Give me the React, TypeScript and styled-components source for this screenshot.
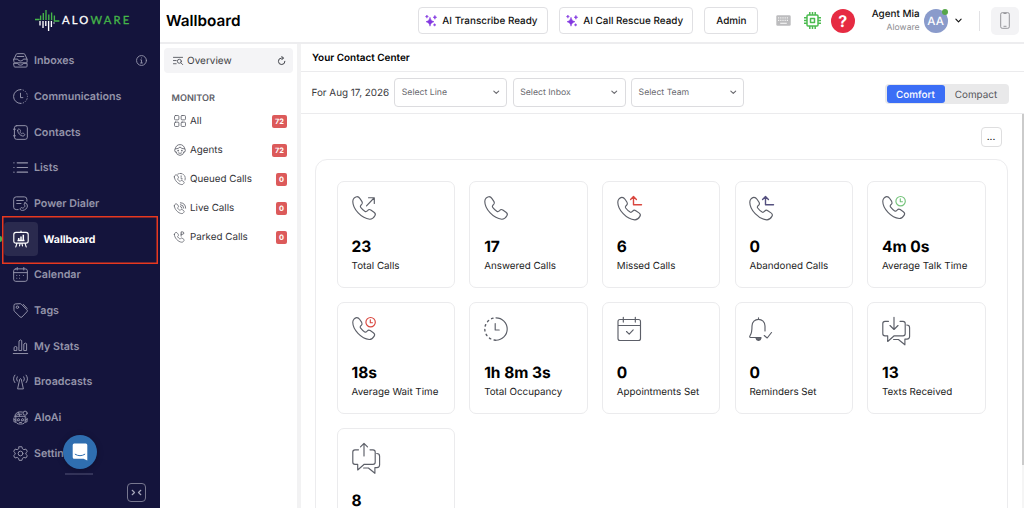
import React from "react";
import styled, { createGlobalStyle } from "styled-components";

const GlobalStyle = createGlobalStyle`
  *, *::before, *::after { box-sizing: border-box; }
  html, body { margin: 0; padding: 0; }
  body {
    font-family: Inter, "Liberation Sans", sans-serif;
    text-rendering: geometricPrecision;
    background: #fff;
    color: #111;
    overflow: hidden;
  }
  button { text-rendering: inherit; }
  svg { display: block; flex: none; }
`;

const Page = styled.div`
  display: flex;
  width: 1024px;
  height: 508px;
  overflow: hidden;
  background: #fff;
`;

/* ---------- Sidebar ---------- */

const Sidebar = styled.aside`
  position: relative;
  display: flex;
  flex-direction: column;
  flex: none;
  width: 160px;
  height: 508px;
  background: #14143c;
`;

const Brand = styled.div`
  display: flex;
  align-items: center;
  height: 42.8px;
  padding: 0 0 1px 35px;
`;

const BrandName = styled.span`
  margin-left: 2px;
  font-family: Lato, Inter, sans-serif;
  font-size: 11.2px;
  line-height: 14px;
  letter-spacing: 2.2px;
  color: #fff;
  white-space: nowrap;
  -webkit-text-stroke: 0.3px currentColor;
`;

const BrandAccent = styled.span`
  color: #45b649;
`;

const NavItem = styled.a<{ $active?: boolean }>`
  display: flex;
  align-items: center;
  flex: none;
  height: 35.7px;
  padding-left: ${(p) => (p.$active ? "4px" : "13px")};
  gap: 6px;
  font-size: ${(p) => (p.$active ? "10.5px" : "10.7px")};
  font-weight: ${(p) => (p.$active ? 700 : 600)};
  color: ${(p) => (p.$active ? "#fff" : "#9494aa")};
  white-space: nowrap;
`;

const NavTile = styled.span`
  display: flex;
  align-items: center;
  justify-content: center;
  width: 33.5px;
  height: 34px;
  border-radius: 4px;
  background: #2a2a4e;
`;

const NavInfo = styled.span`
  margin-left: auto;
  padding-right: 13px;
`;

const ActiveDot = styled.span`
  position: absolute;
  left: -2px;
  top: 236px;
  width: 4px;
  height: 6px;
  border-radius: 3px;
  background: #4caf50;
`;

const Highlight = styled.span`
  position: absolute;
  left: 2px;
  top: 216px;
  width: 156px;
  height: 48px;
  border: 1px solid #e8381f;
  box-shadow: inset 0 0 0 0.5px #e8381f;
`;

const ChatBubble = styled.button`
  position: absolute;
  left: 63px;
  top: 435px;
  display: flex;
  align-items: center;
  justify-content: center;
  width: 34px;
  height: 34px;
  padding: 0;
  border: 0;
  border-radius: 50%;
  background: #2f6eb0;
  box-shadow: 0 1px 6px rgba(0, 0, 0, 0.25);
`;

const ChatHandle = styled.span`
  position: absolute;
  left: 65px;
  top: 473px;
  width: 28px;
  height: 1.5px;
  background: #34345a;
`;

const CollapseRow = styled.div`
  display: flex;
  justify-content: flex-end;
  margin-top: auto;
  padding: 0 14px 6px 0;
`;

const CollapseButton = styled.button`
  display: flex;
  align-items: center;
  justify-content: center;
  width: 19px;
  height: 19px;
  padding: 0;
  border: 1px solid #77778f;
  border-radius: 4px;
  background: transparent;
  color: #a6a6ba;
`;

/* ---------- Header ---------- */

const Main = styled.div`
  display: flex;
  flex-direction: column;
  flex: none;
  width: 864px;
`;

const Header = styled.header`
  display: flex;
  align-items: center;
  flex: none;
  height: 44px;
  padding: 0 5px 1px 6px;
  border-bottom: 2px solid #ededef;
`;

const PageTitle = styled.h1`
  margin: 0;
  width: 252px;
  font-size: 15.3px;
  line-height: 20px;
  font-weight: 600;
  color: #000;
`;

const HeaderButton = styled.button<{ $width: number; $gap: number }>`
  display: flex;
  align-items: center;
  justify-content: center;
  flex: none;
  gap: 5.5px;
  width: ${(p) => p.$width}px;
  height: 27px;
  margin-right: ${(p) => p.$gap}px;
  padding: 0 3px 0 0;
  border: 1px solid #e0e0e3;
  border-radius: 4px;
  background: #fff;
  font: 500 9.9px Inter, sans-serif;
  color: #111;
  white-space: nowrap;
`;

const AdminButton = styled(HeaderButton)`
  padding: 0 0 0 1px;
`;

const HeaderIcon = styled.span<{ $gap: number }>`
  margin-right: ${(p) => p.$gap}px;
`;

const HelpCircle = styled.span`
  display: flex;
  align-items: center;
  justify-content: center;
  width: 24px;
  height: 24px;
  border-radius: 50%;
  background: #e62b42;
  color: #fff;
  font-size: 16px;
  font-weight: 700;
`;

const UserText = styled.div`
  display: flex;
  flex-direction: column;
  align-items: flex-end;
  width: 65px;
  margin-right: 4px;
  line-height: 14px;
  white-space: nowrap;
`;

const UserName = styled.span`
  font-size: 9.9px;
  font-weight: 500;
  color: #111;
`;

const UserCompany = styled.span`
  font-size: 8.6px;
  color: #8e8e93;
`;

const Avatar = styled.span`
  position: relative;
  display: flex;
  align-items: center;
  justify-content: center;
  width: 24px;
  height: 24px;
  border-radius: 50%;
  background: #8a9bcb;
  color: #fff;
  font-size: 11.5px;
  font-weight: 500;
`;

const StatusDot = styled.span`
  position: absolute;
  right: 0;
  top: 0;
  width: 6px;
  height: 6px;
  border-radius: 50%;
  background: #57a64a;
`;

const UserMenuToggle = styled.span`
  margin-left: 7.5px;
`;

const HeaderDivider = styled.span`
  width: 1px;
  height: 20px;
  margin: 0 11.5px 0 16.5px;
  background: #e2e2e5;
`;

const PhoneButton = styled.button`
  display: flex;
  align-items: center;
  justify-content: center;
  width: 28px;
  height: 28px;
  padding: 0;
  border: 0;
  border-radius: 5px;
  background: #f3f3f5;
`;

/* ---------- Monitor column ---------- */

const Body = styled.div`
  display: flex;
  flex: 1;
  min-height: 0;
`;

const Monitor = styled.nav`
  display: flex;
  flex-direction: column;
  flex: none;
  width: 141px;
  padding: 4px 4px 0 4px;
  border-right: 4px solid #f2f2f3;
`;

const OverviewRow = styled.div`
  display: flex;
  align-items: center;
  height: 25px;
  padding: 0 7px 0 9px;
  gap: 4px;
  border-radius: 4px;
  background: #f4f4f6;
  font-size: 10px;
  color: #3d3d42;
`;

const Refresh = styled.span`
  margin-left: auto;
`;

const MonitorHeading = styled.div`
  height: 28px;
  margin-top: 14px;
  padding: 0 0 0 7.5px;
  font-size: 9.1px;
  line-height: 24px;
  font-weight: 600;
  color: #5e6068;
`;

const MonitorItem = styled.div`
  display: flex;
  align-items: center;
  height: 28.9px;
  padding: 0 6px 0 9.5px;
  gap: 4.5px;
  font-size: 9.8px;
  color: #333338;
  white-space: nowrap;
`;

const MonitorName = styled.span`
  padding-top: 1px;
`;

const MonitorItems = styled.div`
  margin-top: -8.5px;
`;

const Badge = styled.span`
  margin: 1px 0 0 auto;
  padding: 0 3px;
  height: 13px;
  border-radius: 2px;
  background: #dc5a5a;
  font-size: 7.4px;
  line-height: 13px;
  font-weight: 700;
  color: #fff;
`;

/* ---------- Content ---------- */

const Content = styled.section`
  display: flex;
  flex-direction: column;
  flex: 1;
  min-width: 0;
`;

const ContentTitle = styled.h2`
  flex: none;
  height: 28px;
  margin: 0;
  padding-left: 11px;
  border-bottom: 1px solid #ebebed;
  font-size: 9.95px;
  line-height: 28px;
  font-weight: 600;
  color: #000;
`;

const Toolbar = styled.div`
  display: flex;
  align-items: center;
  flex: none;
  height: 42px;
  padding: 0 15px 0 10.5px;
  border-bottom: 1px solid #ebebed;
`;

const DateLabel = styled.span`
  width: 82.8px;
  font-size: 9.9px;
  color: #3a3a3e;
  white-space: nowrap;
`;

const Select = styled.div`
  display: flex;
  align-items: center;
  justify-content: space-between;
  width: 113px;
  height: 29px;
  margin-right: 5.4px;
  padding: 0 7px 0 6.5px;
  border: 1px solid #dcdcdf;
  border-radius: 4px;
  font-size: 8.7px;
  color: #6b6b70;
`;

const Segmented = styled.div`
  display: flex;
  align-items: center;
  width: 124px;
  height: 20px;
  margin: 3px 0 0 auto;
  padding: 0 1.5px;
  border-radius: 4px;
  background: #e9e9ea;
`;

const Segment = styled.button<{ $selected?: boolean }>`
  flex: ${(p) => (p.$selected ? "0 0 58px" : "1")};
  height: 17.5px;
  padding: 1px 0 0;
  border: 0;
  border-radius: 3px;
  background: ${(p) => (p.$selected ? "#3b6ef6" : "transparent")};
  font: ${(p) => (p.$selected ? 500 : 400)} 9.9px Inter, sans-serif;
  color: ${(p) => (p.$selected ? "#fff" : "#55555a")};
`;

const ScrollArea = styled.div`
  display: flex;
  flex: 1;
  min-height: 0;
`;

const Board = styled.div`
  display: flex;
  flex-direction: column;
  flex: 1;
  min-width: 0;
  padding: 13px 14px 0 14px;
  overflow: hidden;
`;

const MoreButton = styled.button`
  align-self: flex-end;
  flex: none;
  width: 21px;
  height: 20px;
  margin-right: 6px;
  padding: 0;
  border: 1px solid #dededf;
  border-radius: 4px;
  background: #fff;
  font: 400 10px/16px Inter, sans-serif;
  color: #222;
`;

const CardPanel = styled.div`
  display: grid;
  grid-template-columns: repeat(5, 118.5px);
  grid-template-rows: 107.5px 111.5px 114.5px;
  column-gap: 14.1px;
  row-gap: 14px;
  flex: none;
  height: 420px;
  margin-top: 12px;
  padding: 20.5px 20.8px;
  border: 1px solid #ececee;
  border-radius: 12px;
`;

const Card = styled.article`
  display: flex;
  flex-direction: column;
  padding: 14px 0 10.6px 13.8px;
  border: 1px solid #ebebed;
  border-radius: 7px;
`;

const CardIcon = styled.div`
  flex: 1;
`;

const CardValue = styled.div`
  font-size: 15.5px;
  line-height: 20px;
  font-weight: 700;
  color: #000;
`;

const CardLabel = styled.div`
  padding-top: 1px;
  font-size: 9.8px;
  line-height: 18px;
  color: #222;
  white-space: nowrap;
`;

const Scrollbar = styled.div`
  flex: none;
  width: 2.5px;
  background: #f5f5f5;
`;

const ScrollThumb = styled.div`
  height: 351px;
  background: #cbcbcb;
`;

/* ---------- Icons ---------- */

type GlyphProps = {
  size?: number;
  box?: number;
  weight?: number;
  color?: string;
  children: React.ReactNode;
};

const Glyph = ({ size = 15, box = 16, weight = 1, color = "currentColor", children }: GlyphProps) => (
  <svg
    width={size}
    height={size}
    viewBox={`0 0 ${box} ${box}`}
    fill="none"
    stroke={color}
    strokeWidth={weight}
    strokeLinecap="round"
    strokeLinejoin="round"
    overflow="visible"
  >
    {children}
  </svg>
);

const HANDSET =
  "M.8 5.5C.8 3 2.8 .9 4.8 .7C6.2 .6 7.2 1.4 8 2.6L10 5.6C10.7 6.8 10.5 7.8 9.6 8.6L8.8 9.3C8.2 10 8.2 10.6 8.7 11.3C10 13 11.5 14.5 13.1 15.4C13.9 15.8 14.5 15.7 15.1 15L15.8 14.3C16.6 13.4 17.7 13.3 18.8 14L22 16.2C23.5 17.2 23.7 18.4 22.9 19.7C21.6 21.9 20.2 23.3 17.8 23.2C9.5 22.6.8 13 .8 5.5Z";

const Logo = () => (
  <svg width="25" height="22" viewBox="0 0 25 22" fill="none" strokeWidth="1.35">
    <path stroke="#45b649" d="M0 9.5h4.6M5.6 5.5v4.7M8.3 3v7M11 0v10M13.8 4.5v5.7M16.6 2.5v7.7M19.4 5.5v5.5h5" />
    <path stroke="#fff" d="M5 11v4.5M8 11v7M10.8 11v5M13.6 11v10M16.4 11v6M19 12.5v1" />
  </svg>
);

const navIcons: Record<string, React.ReactNode> = {
  Inboxes: (
    <path d="M1 6.5L3.5 1.2Q3.8.7 4.5.7h7q.7 0 1 .5L15 6.5M1 6.5h4q.3 2 3 2t3-2h4v3.2q0 .8-.8.8H1.8Q1 10.5 1 9.7zM1 11h4q.3 2 3 2t3-2h4v3q0 1-1 1H2q-1 0-1-1zM4.5 3.7h7" />
  ),
  Communications: (
    <>
      <path d="M8 .6a7.4 7.4 0 1 0 0 14.8M8 4.5v4.7h2.5" />
      <path d="M8 .6a7.4 7.4 0 0 1 0 14.8" strokeDasharray=".6 2.2" />
    </>
  ),
  Contacts: (
    <>
      <path d="M4 .7h9q2.3 0 2.3 2.3v10q0 2.3-2.3 2.3H4Q1.5 15.3 1.5 13V3Q1.5.7 4 .7zM.5 4.5h2M.5 11.5h2" />
      <g transform="translate(4.6 4) scale(.34)" strokeWidth="2.9">
        <path d={HANDSET} />
      </g>
    </>
  ),
  Lists: <path d="M.9 3h.2M.9 8h.2M.9 13h.2M4.5 3h11M4.5 8h11M4.5 13h11" strokeWidth="1.3" />,
  "Power Dialer": (
    <>
      <path d="M5.5 14.5H3.5Q.7 14.5.7 12V3.5Q.7.9 3.5.9h8.5q2.8 0 2.8 2.6v2M4 4.8h7M4 8h4.5" />
      <path d="M12.8 7.2q2.7.5 2.6 3.5c-.3 2.6-2.6 4.5-5.2 4.7-2 .1-3-1-2.4-2.2.8-1.3 2-.8 2.6-.2 1.2-.5 2.2-1.4 2.4-2.5-1-.7-1.4-2.6 0-3.3z" />
    </>
  ),
  Calendar: (
    <path d="M3 2h10q2.3 0 2.3 2v9q0 2.3-2.3 2.3H3Q.7 15.3.7 13V4Q.7 2 3 2zM.7 6h14.6M4.5.5v2.7M11.5.5v2.7M4 9h.1M7 9h.1M11 9h.1M4 12h.1M7 12h.1" />
  ),
  Tags: (
    <>
      <path d="M1 2.5Q1 1 2.5 1l5-.3q.8 0 1.4.6l6 6q1 1 0 2l-5.3 5.6q-1 1-2 0l-6-6Q1 8.3 1 7.5z" />
      <path d="M11 1.5l4 4.2" />
      <circle cx="4.7" cy="4.5" r="1.3" />
    </>
  ),
  "My Stats": (
    <path d="M.3 15.5h15.4M1.5 8.5q1.2-1.2 2.6 0v3.8H1.5zM6.7 1.7q1.3-1.6 2.6 0v10.6H6.7zM11.9 5q1.3-1.4 2.6 0v7.3h-2.6z" />
  ),
  Broadcasts: (
    <path d="M5 15.5L7.2 5.5q.8-1.2 1.6 0L11 15.5zM4.5 3q-1.5 2.2 0 4.5M2 1.2q-3 4 0 8M11.5 3q1.5 2.2 0 4.5M14 1.2q3 4 0 8" />
  ),
  AloAi: (
    <>
      <path d="M2 6.5q.8-4.2 5-4.5l3 .2M1.2 7.5l2-.8h8.6l2 .8M3 8v4q0 3 5 3t5-3V8M1 9v3.5l2 .5M15 9v3.5l-2 .5M4.3 4.5h5" />
      <path d="M5 9.5q.7-1 1.7 0v2H5zM9.3 9.5q.7-1 1.7 0v2H9.3zM7 13.3h2" />
      <circle cx="12.9" cy="3.4" r="2.2" />
      <path d="M2.7 5.5l1.2 1.2M6 2.5l1 4M1 10l2 1M15 10l-2 1" />
    </>
  ),
  Settings: (
    <>
      <path d="M6.5.8h3l.6 2.2 1.5.9 2.2-.6 1.5 2.5L13.7 7.3v1.5l1.6 1.5-1.5 2.5-2.2-.6-1.5.9-.6 2.2h-3l-.6-2.2-1.5-.9-2.2.6L.7 10.3l1.6-1.5V7.3L.7 5.8l1.5-2.5 2.2.6L5.9 3z" />
      <circle cx="8" cy="8" r="2.5" />
    </>
  ),
};

const WallboardGlyph = () => (
  <Glyph size={16} weight={1.15}>
    <path d="M3 1.3h10q2.2 0 2.2 2.2v6.4q0 2.2-2.2 2.2H3Q.8 12.1.8 9.9V3.5Q.8 1.3 3 1.3zM8 0v1M3.8 12.9l-1 3M12.2 12.9l1 3M7 12.9l-.5 2M9 12.9l.5 2" />
    <path d="M5.7 9.3V7M8 9.3V5.5M10.3 9.3V3.8M4.5 9.5h7" strokeWidth="1.5" strokeLinecap="butt" />
  </Glyph>
);

const Sparkles = () => (
  <svg width="12" height="12" viewBox="0 0 12 12" fill="#8338e0" stroke="#8338e0" strokeWidth=".5" strokeLinejoin="round">
    <path d="M5 2.2c.7 2.8 1.3 3.5 4 4.5-2.7 1-3.3 1.7-4 4.5-.7-2.8-1.3-3.5-4-4.5 2.7-1 3.3-1.7 4-4.5zM9.9.3c.3 1.3.6 1.6 1.9 2-1.3.4-1.6.7-1.9 2-.3-1.3-.6-1.6-1.9-2 1.3-.4 1.6-.7 1.9-2zM1.9 0c.2.9.5 1.3 1.5 1.6-1 .3-1.3.7-1.5 1.6C1.7 2.3 1.4 1.9.4 1.6 1.4 1.3 1.7.9 1.9 0zM9.6 8.6c.2.7.4 1 1.2 1.3-.8.3-1 .5-1.2 1.3-.2-.8-.4-1-1.2-1.3.8-.3 1-.6 1.2-1.3z" />
  </svg>
);

const Chevron = ({ color = "#333", size = 7 }: { color?: string; size?: number }) => (
  <Glyph size={size} box={8} weight={1.3} color={color}>
    <path d="M1 2.5L4 5.5L7 2.5" />
  </Glyph>
);

const KeyboardGlyph = () => (
  <svg width="15" height="11" viewBox="0 0 15 11">
    <rect x=".3" y=".3" width="14.4" height="10.4" rx="1.3" fill="#bcbcbe" />
    <path d="M2 2.8h11M2 5.3h11" stroke="#f2f2f2" strokeWidth="1.2" strokeDasharray="1.2 1" />
    <path d="M4.2 8.3h6.6" stroke="#f2f2f2" strokeWidth="1.2" />
  </svg>
);

const ChipGlyph = () => (
  <Glyph size={17} box={17} weight={1.5} color="#4cbb50">
    <rect x="3" y="3" width="11" height="11" rx="1" />
    <rect x="6.5" y="6.5" width="4" height="4" />
    <path strokeLinecap="butt" d="M5.8 0v3M8.5 0v3M11.2 0v3M5.8 14v3M8.5 14v3M11.2 14v3M0 5.8h3M0 8.5h3M0 11.2h3M14 5.8h3M14 8.5h3M14 11.2h3" />
  </Glyph>
);

const monitorIcons: Record<string, React.ReactNode> = {
  All: (
    <>
      <rect x=".7" y=".7" width="5.8" height="5.8" rx="1.3" />
      <rect x="9.5" y=".7" width="5.8" height="5.8" rx="1.3" />
      <rect x=".7" y="9.5" width="5.8" height="5.8" rx="1.3" />
      <rect x="9.5" y="9.5" width="5.8" height="5.8" rx="1.3" />
    </>
  ),
  Agents: (
    <>
      <path d="M1.5 6.5C2.3 2.8 4.7.8 8 .8s5.7 2 6.5 5.7M1.5 6.5q-1.5 1.5 0 4l1.5.5M14.5 6.5q1.5 1.5 0 4l-1.5.5M2.5 6.5Q6 6.5 8 4q2 2.5 5.5 2.5M2.5 10.5q1.2 4.7 5.5 4.7t5.5-4.7M6 12q2 1.3 4 0" />
      <path d="M5.5 8.7v.3M10.5 8.7v.3" strokeWidth="2" />
    </>
  ),
  "Queued Calls": (
    <>
      <g transform="translate(0 2) scale(.58)" strokeWidth="1.8">
        <path d={HANDSET} />
      </g>
      <path d="M5 1.5q4-2 7.5.5t2 8M9.5 3.8v4H12" strokeDasharray="2 1.5" />
    </>
  ),
  "Live Calls": (
    <>
      <g transform="translate(0 2) scale(.58)" strokeWidth="1.8">
        <path d={HANDSET} />
      </g>
      <path d="M8.5 6q2 .2 2 2.2M8.5 3.5q4.5.2 4.5 4.7M8.5 1q7 .2 7 7.2" />
    </>
  ),
  "Parked Calls": (
    <>
      <g transform="translate(0 1.5) scale(.58)" strokeWidth="1.8">
        <path d={HANDSET} />
      </g>
      <path d="M9.5 6.8V1.2h2q1.6.2 1.6 1.6T11.5 4.4h-2" strokeWidth="1.2" />
    </>
  ),
};

const RED = "#d9463e";

const BUBBLES = (
  <>
    <path d="M6.5 4.3H3Q.8 4.3.8 6.5v10.3q0 2 2.2 2h2.7v5.7l6.5-5.7H21q2.2 0 2.2-2V6.5q0-2.2-2.2-2.2h-3" />
    <path d="M24.7 8q2.9 0 2.9 2.7v8.9q0 2.5-2.7 2.5h-2v5.7l-6.5-5.3h-4.8" />
  </>
);

const cardIcons: Record<string, React.ReactNode> = {
  "Total Calls": (
    <>
      <path d={HANDSET} />
      <path d="M14.5 9.8L22 2M16.5 1.7h5.8v5.8" />
    </>
  ),
  "Answered Calls": <path d={HANDSET} />,
  "Missed Calls": (
    <>
      <path d={HANDSET} transform="translate(0 .7)" />
      <path stroke={RED} strokeWidth="1.4" d="M24.5 8.8h-8V.8M13.6 3.5L16.5.6l2.9 2.9" />
    </>
  ),
  "Abandoned Calls": (
    <>
      <path d={HANDSET} transform="translate(0 .7)" />
      <path stroke="#54507f" strokeWidth="1.4" d="M24.5 8.8h-8V.8M13.6 3.5L16.5.6l2.9 2.9" />
    </>
  ),
  "Average Talk Time": (
    <>
      <path d={HANDSET} transform="scale(.97)" />
      <path stroke="#74c37a" d="M23.3 5.2a4.7 4.7 0 1 1-9.4 0a4.7 4.7 0 1 1 9.4 0M18.3 2.7v3h2.2" />
    </>
  ),
  "Average Wait Time": (
    <>
      <path d={HANDSET} transform="scale(.97)" />
      <path stroke={RED} d="M23.3 5.2a4.7 4.7 0 1 1-9.4 0a4.7 4.7 0 1 1 9.4 0M18.3 2.7v3h2.2" />
    </>
  ),
  "Total Occupancy": (
    <>
      <path d="M12 .8a11.2 11.2 0 0 1 0 22.4M11.2 6.5v6.5h4" />
      <path d="M12 .8a11.2 11.2 0 0 0 0 22.4" strokeDasharray="1.5 3.5" strokeDashoffset="-3" strokeWidth="1.4" />
    </>
  ),
  "Appointments Set": (
    <path d="M3 2.5h18.5q2 0 2 2v17q0 2-2 2H3q-2 0-2-2v-17q0-2 2-2zM1 8.5h22.5M6.3.3v4.8M18.3.3v4.8M9.5 14.5l2.7 2.7 4-4.3" />
  ),
  "Reminders Set": (
    <>
      <path d="M9.5.8v1.4M12 20.5H1.5c-1-.2-1-1.4-.3-2.2Q3 16 3 9c0-4 3-6.6 6.5-6.6S16 5 16 9v5M15.2 18.5l3 2.5 4.3-5.5" />
      <path d="M7 21.2h5q-.5 2.2-2.5 2.2T7 21.2z" fill="#5c5f68" />
    </>
  ),
  "Texts Received": (
    <>
      {BUBBLES}
      <path d="M12 .2v12M8 8.5l4 4 4-4" />
    </>
  ),
  "Texts Sent": (
    <g transform="translate(0 2.5)">
      {BUBBLES}
      <path d="M12 10.5V-2M8.5 1.3L12-2.2l3.5 3.5" />
    </g>
  ),
};

/* ---------- Data ---------- */

const navigation = [
  "Inboxes",
  "Communications",
  "Contacts",
  "Lists",
  "Power Dialer",
  "Wallboard",
  "Calendar",
  "Tags",
  "My Stats",
  "Broadcasts",
  "AloAi",
  "Settings",
];

const monitors: [string, number][] = [
  ["All", 72],
  ["Agents", 72],
  ["Queued Calls", 0],
  ["Live Calls", 0],
  ["Parked Calls", 0],
];

const metrics: [string, string][] = [
  ["23", "Total Calls"],
  ["17", "Answered Calls"],
  ["6", "Missed Calls"],
  ["0", "Abandoned Calls"],
  ["4m 0s", "Average Talk Time"],
  ["18s", "Average Wait Time"],
  ["1h 8m 3s", "Total Occupancy"],
  ["0", "Appointments Set"],
  ["0", "Reminders Set"],
  ["13", "Texts Received"],
  ["8", "Texts Sent"],
];

/* ---------- Page ---------- */

export default function App() {
  return (
    <>
      <GlobalStyle />
      <Page>
        <Sidebar>
          <Brand>
            <Logo />
            <BrandName>
              ALO<BrandAccent>WARE</BrandAccent>
            </BrandName>
          </Brand>
          {navigation.map((name) =>
            name === "Wallboard" ? (
              <NavItem key={name} $active>
                <NavTile>
                  <WallboardGlyph />
                </NavTile>
                {name}
              </NavItem>
            ) : (
              <NavItem key={name}>
                <Glyph weight={1.05}>{navIcons[name]}</Glyph>
                {name}
                {name === "Inboxes" && (
                  <NavInfo>
                    <Glyph size={11} box={12} weight={1}>
                      <circle cx="6" cy="6" r="5.4" />
                      <path d="M6 3.2v.1M5.2 5.3H6v3.2M5 8.7h2" />
                    </Glyph>
                  </NavInfo>
                )}
              </NavItem>
            )
          )}
          <CollapseRow>
            <CollapseButton aria-label="Collapse menu">
              <Glyph size={11} box={11} weight={1.2}>
                <path d="M1.2 3.3l2.3 2.2-2.3 2.2M9.8 3.3L7.5 5.5l2.3 2.2" />
              </Glyph>
            </CollapseButton>
          </CollapseRow>
          <ActiveDot />
          <Highlight />
          <ChatHandle />
          <ChatBubble aria-label="Open chat">
            <svg width="16" height="18" viewBox="0 0 16 18" fill="none">
              <path d="M2.2.5h11.6q1.5 0 1.5 1.5v15.5L11.5 15.8H2.2Q.7 15.8.7 14.3V2Q.7.5 2.2.5z" fill="#fff" />
              <path d="M3.2 11.3q4.8 3 9.6 0" stroke="#2f6eb0" strokeWidth="1" strokeLinecap="round" />
            </svg>
          </ChatBubble>
        </Sidebar>

        <Main>
          <Header>
            <PageTitle>Wallboard</PageTitle>
            <HeaderButton $width={130} $gap={11}>
              <Sparkles />
              AI Transcribe Ready
            </HeaderButton>
            <HeaderButton $width={134.5} $gap={11}>
              <Sparkles />
              AI Call Rescue Ready
            </HeaderButton>
            <AdminButton $width={53.5} $gap={18}>
              Admin
            </AdminButton>
            <HeaderIcon $gap={13}>
              <KeyboardGlyph />
            </HeaderIcon>
            <HeaderIcon $gap={10}>
              <ChipGlyph />
            </HeaderIcon>
            <HelpCircle>?</HelpCircle>
            <UserText>
              <UserName>Agent Mia</UserName>
              <UserCompany>Aloware</UserCompany>
            </UserText>
            <Avatar>
              AA
              <StatusDot />
            </Avatar>
            <UserMenuToggle>
              <Chevron color="#111" />
            </UserMenuToggle>
            <HeaderDivider />
            <PhoneButton aria-label="Open phone">
              <svg width="10" height="17" viewBox="0 0 10 17" fill="none" stroke="#96969b">
                <rect x=".7" y=".7" width="8.6" height="15.6" rx="1.5" />
                <path d="M3.5 1.5h3M3.5 14.3h3" />
              </svg>
            </PhoneButton>
          </Header>

          <Body>
            <Monitor>
              <OverviewRow>
                <Glyph size={10} box={11} weight={1} color="#55575f">
                  <path d="M.5 1.5h10M.5 5h3M.5 8.5h3" />
                  <circle cx="7" cy="5.8" r="2.2" />
                  <path d="M8.7 7.5l2 2" />
                </Glyph>
                Overview
                <Refresh>
                  <Glyph size={9} box={10} weight={1.1} color="#3f4148">
                    <path d="M6.8 2.3H4.8a3.6 3.6 0 1 0 4 3.6M5.3.4L7.2 2.3L5.3 4.2" />
                  </Glyph>
                </Refresh>
              </OverviewRow>
              <MonitorHeading>MONITOR</MonitorHeading>
              <MonitorItems>
                {monitors.map(([name, count]) => (
                  <MonitorItem key={name}>
                    <Glyph size={12} weight={1.1} color="#5c5f68">
                      {monitorIcons[name]}
                    </Glyph>
                    <MonitorName>{name}</MonitorName>
                    <Badge>{count}</Badge>
                  </MonitorItem>
                ))}
              </MonitorItems>
            </Monitor>

            <Content>
              <ContentTitle>Your Contact Center</ContentTitle>
              <Toolbar>
                <DateLabel>For Aug 17, 2026</DateLabel>
                {["Select Line", "Select Inbox", "Select Team"].map((label) => (
                  <Select key={label}>
                    {label}
                    <Chevron color="#66666b" size={6.5} />
                  </Select>
                ))}
                <Segmented>
                  <Segment $selected>Comfort</Segment>
                  <Segment>Compact</Segment>
                </Segmented>
              </Toolbar>
              <ScrollArea>
                <Board>
                  <MoreButton>...</MoreButton>
                  <CardPanel>
                    {metrics.map(([value, label]) => (
                      <Card key={label}>
                        <CardIcon>
                          <Glyph size={24} box={24} weight={1.15} color="#5c5f68">
                            {cardIcons[label]}
                          </Glyph>
                        </CardIcon>
                        <CardValue>{value}</CardValue>
                        <CardLabel>{label}</CardLabel>
                      </Card>
                    ))}
                  </CardPanel>
                </Board>
                <Scrollbar>
                  <ScrollThumb />
                </Scrollbar>
              </ScrollArea>
            </Content>
          </Body>
        </Main>
      </Page>
    </>
  );
}
